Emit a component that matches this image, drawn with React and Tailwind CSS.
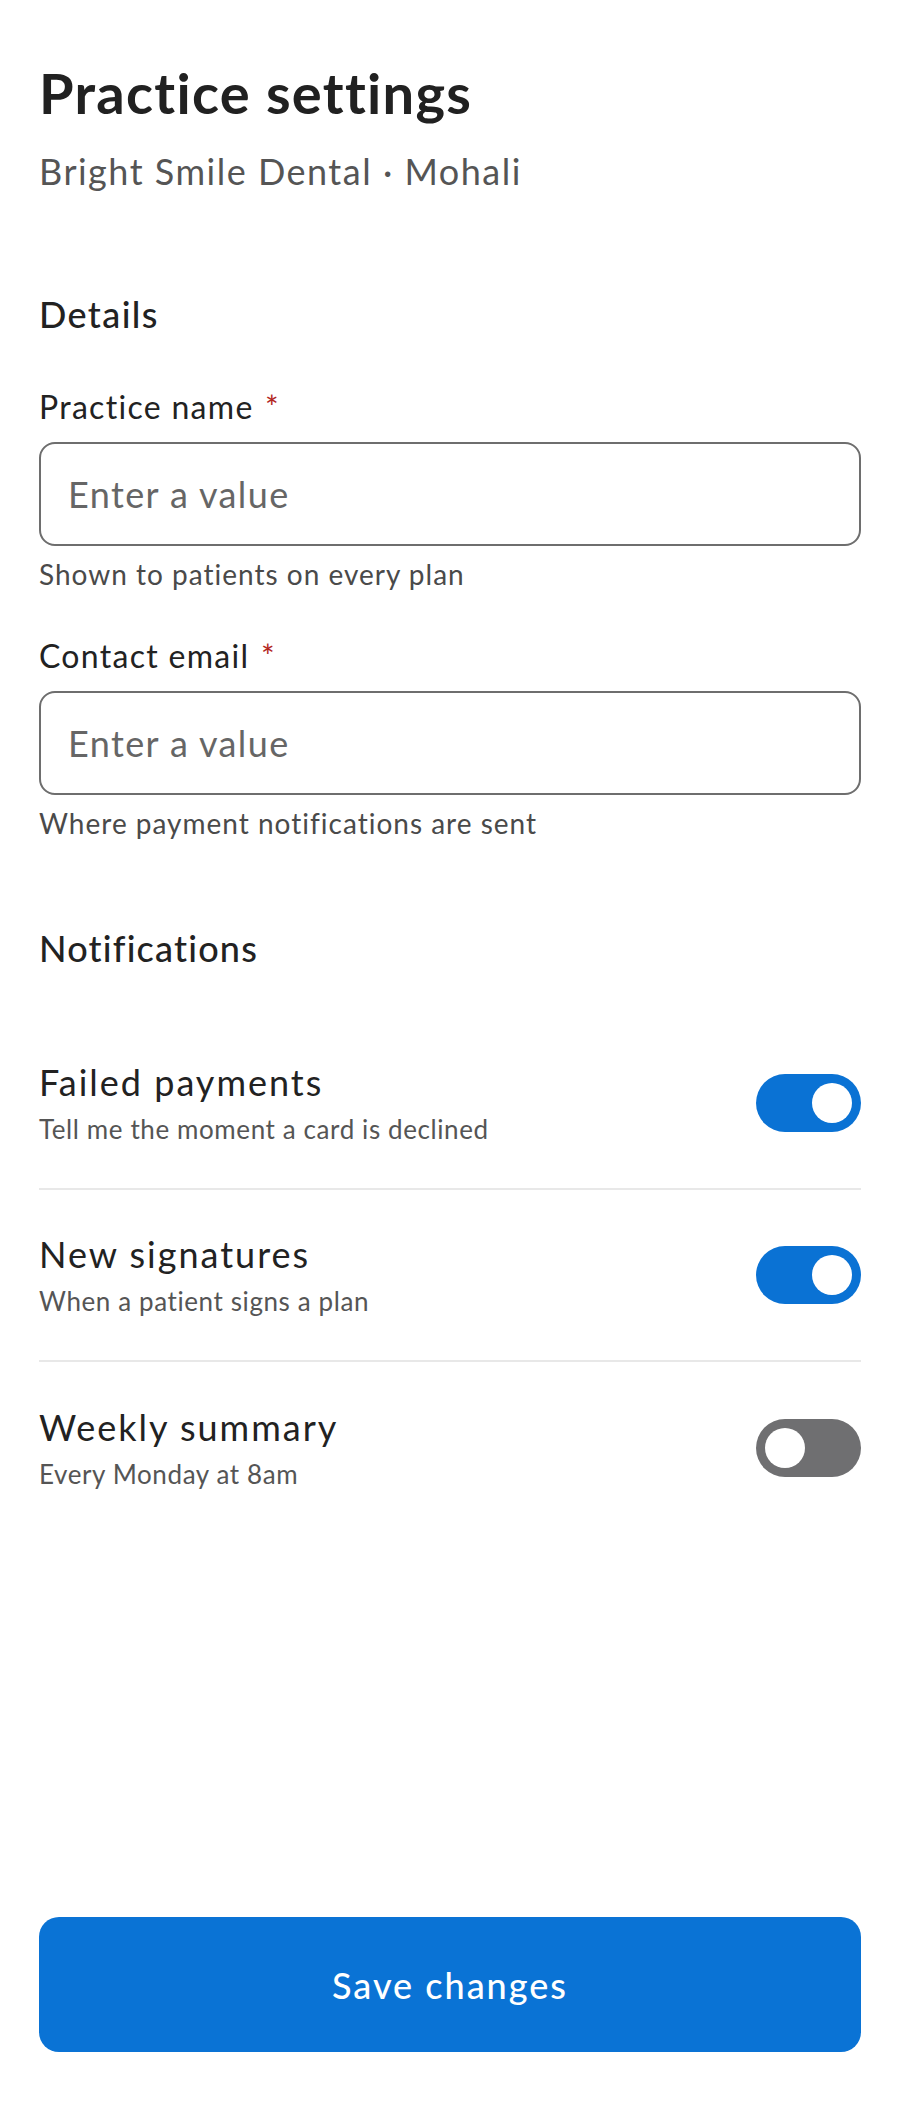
import React from "react";

function Toggle({ on }) {
  return (
    <div
      className={
        "flex h-[58px] w-[105px] shrink-0 items-center rounded-full px-[9px] " +
        (on ? "justify-end bg-[#0a72d4]" : "justify-start bg-[#6f6f71]")
      }
    >
      <div className="h-[40px] w-[40px] rounded-full bg-white" />
    </div>
  );
}

function Field({ label, helper, className }) {
  return (
    <div className={className}>
      <label className="block text-[32px] leading-[44px] tracking-[1.3px] text-[#222222]">
        {label} <span className="ml-[2px] text-[#b3261e]">*</span>
      </label>
      <input
        className="mt-[13px] block h-[104px] w-full rounded-[16px] border-2 border-[#6e6e6e] bg-white px-[27px] text-[36px] tracking-[1.4px] text-[#222222] outline-none placeholder:text-[#666666]"
        placeholder="Enter a value"
      />
      <p className="mt-[8px] text-[28px] leading-[40px] tracking-[1px] text-[#4a4a4a]">{helper}</p>
    </div>
  );
}

function Row({ title, desc, on, last }) {
  return (
    <div
      className={
        "flex h-[172px] items-center justify-between " +
        (last ? "" : "border-b-2 border-[#e8e8e8]")
      }
    >
      <div>
        <div className="text-[36px] leading-[44px] tracking-[2px] text-[#222222]">{title}</div>
        <div className="mt-[7px] text-[26px] leading-[36px] tracking-[0.6px] text-[#555555]">
          {desc}
        </div>
      </div>
      <Toggle on={on} />
    </div>
  );
}

export default function App() {
  return (
    <div
      className="flex min-h-screen flex-col bg-white px-[39px]"
      style={{ fontFamily: "Lato, 'Noto Sans', sans-serif" }}
    >
      <header className="pt-[59px]">
        <h1 className="text-[56px] font-bold leading-[68px] tracking-[1.3px] text-[#212121]">
          Practice settings
        </h1>
        <p className="mt-[20px] text-[36px] leading-[48px] tracking-[1.5px] text-[#555555]">
          Bright Smile Dental · Mohali
        </p>
      </header>

      <section className="mt-[95px]">
        <h2 className="text-[36px] font-medium leading-[48px] tracking-[1.4px] text-[#222222]">Details</h2>
        <Field className="mt-[47px]" label="Practice name" helper="Shown to patients on every plan" />
        <Field className="mt-[40px]" label="Contact email" helper="Where payment notifications are sent" />
      </section>

      <section className="mt-[81px]">
        <h2 className="text-[36px] font-medium leading-[48px] tracking-[1.2px] text-[#222222]">Notifications</h2>
        <div className="mt-[46px]">
          <Row title="Failed payments" desc="Tell me the moment a card is declined" on />
          <Row title="New signatures" desc="When a patient signs a plan" on />
          <Row title="Weekly summary" desc="Every Monday at 8am" on={false} last />
        </div>
      </section>

      <div className="flex-1" />

      <button className="mb-[50px] h-[135px] w-full rounded-[20px] bg-[#0a73d5] text-[36px] font-medium tracking-[2px] text-white">
        Save changes
      </button>
    </div>
  );
}
